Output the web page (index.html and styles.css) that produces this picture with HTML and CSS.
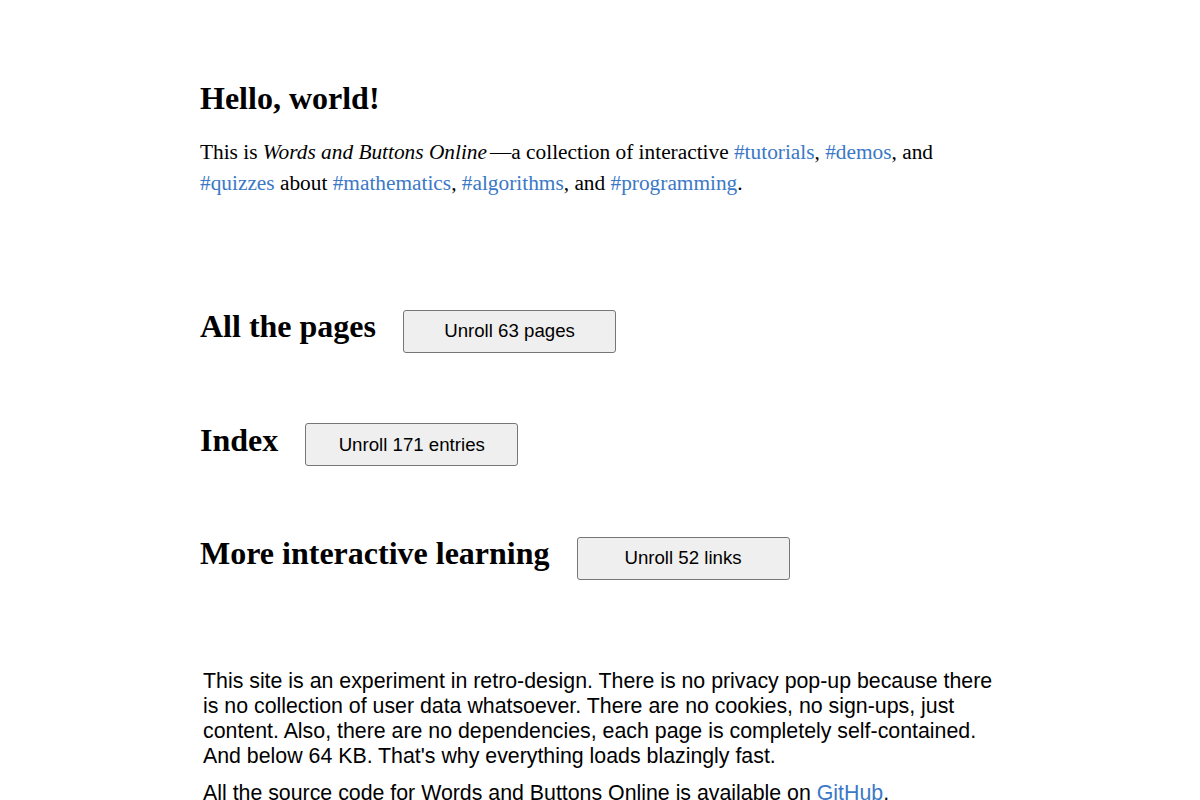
FILE: index.html
```html
<!doctype html>
<html>

<head>
	<title>Words and Buttons Online</title>
	<link rel="stylesheet" href="styles.css">
</head>

<body>
	<div class="page">
		<h1>Hello, world!</h1>
		<p class="intro">This is <i class="title">Words and Buttons Online</i>&mdash;a collection of interactive
			<a href="#">#tutorials</a>, <a href="#">#demos</a>, and <a href="#">#quizzes</a> about
			<a href="#">#mathematics</a>, <a href="#">#algorithms</a>, and <a href="#">#programming</a>.</p>

		<div class="section first">
			<h2>All the pages</h2>
			<button class="unroll">Unroll 63 pages</button>
		</div>
		<div class="section">
			<h2>Index</h2>
			<button class="unroll">Unroll 171 entries</button>
		</div>
		<div class="section">
			<h2>More interactive learning</h2>
			<button class="unroll">Unroll 52 links</button>
		</div>

		<div class="footer">
			<p>This site is an experiment in retro-design. There is no privacy pop-up because there is no
				collection of user data whatsoever. There are no cookies, no sign-ups, just content. Also, there
				are no dependencies, each page is completely self-contained. And below 64 KB. That's why
				everything loads blazingly fast.</p>
			<p>All the source code for Words and Buttons Online is available on <a href="#">GitHub</a>.</p>
		</div>
	</div>
</body>

</html>
```
FILE: styles.css
```css
body {
	margin: 0;
	font-family: "Liberation Serif", "Times New Roman", serif;
	color: #000;
	background: #fff;
}

.page {
	width: 800px;
	margin: 0 auto;
	padding-top: 76px;
}

h1,
h2 {
	font-size: 32px;
	font-weight: bold;
	margin: 0;
	line-height: 44px;
}

.intro {
	font-size: 21.33px;
	line-height: 31px;
	margin: 17px 0 0;
}

.title {
	padding-right: 3px;
}

a {
	color: #3b78c6;
	text-decoration: none;
}

.section {
	display: flex;
	align-items: baseline;
	gap: 27px;
	margin-top: 65px;
}

.section.first {
	margin-top: 105px;
}

.unroll {
	width: 213px;
	height: 43px;
	font-family: "Liberation Sans", Arial, sans-serif;
	font-size: 18.67px;
	color: #000;
	background: #efefef;
	border: 1px solid #767676;
	border-radius: 3px;
	padding: 0;
}

.footer {
	width: 800px;
	margin-top: 89px;
	padding-left: 3px;
	font-family: "Liberation Sans", Arial, sans-serif;
	font-size: 21.33px;
	line-height: 25px;
}

.footer p {
	margin: 0 0 12px;
}
```
